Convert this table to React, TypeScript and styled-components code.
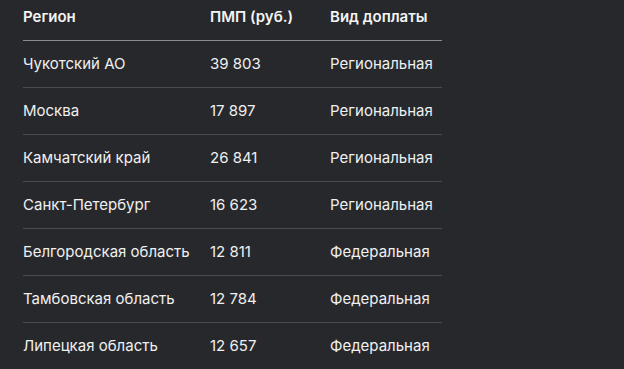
import React from "react";
import styled, { createGlobalStyle } from "styled-components";

const Global = createGlobalStyle`
  html, body { margin: 0; padding: 0; background: #27282c; }
  body { font-family: Inter, "Noto Sans", sans-serif; color: #ececec; }
`;

const Page = styled.div`
  width: 624px;
  height: 369px;
  overflow: hidden;
  padding-left: 23px;
  box-sizing: border-box;
`;

const Table = styled.table`
  width: 419px;
  border-collapse: collapse;
  font-size: 15px;
  line-height: 20px;
`;

const Th = styled.th<{ $w: number }>`
  width: ${(p) => p.$w}px;
  text-align: left;
  font-weight: 600;
  color: #f4f4f4;
  padding: 7px 0 13px 0;
  border-bottom: 1px solid #8c8c8e;
`;

const Td = styled.td`
  padding: 13px 0 13px 0;
  color: #f0f0f0;
  border-bottom: 1px solid #4a4b4f;
  white-space: nowrap;
`;

const rows: [string, string, string][] = [
  ["Чукотский АО", "39 803", "Региональная"],
  ["Москва", "17 897", "Региональная"],
  ["Камчатский край", "26 841", "Региональная"],
  ["Санкт-Петербург", "16 623", "Региональная"],
  ["Белгородская область", "12 811", "Федеральная"],
  ["Тамбовская область", "12 784", "Федеральная"],
  ["Липецкая область", "12 657", "Федеральная"],
];

export default function App() {
  return (
    <>
      <Global />
      <Page>
        <Table>
          <thead>
            <tr>
              <Th $w={187}>Регион</Th>
              <Th $w={120}>ПМП (руб.)</Th>
              <Th $w={112}>Вид доплаты</Th>
            </tr>
          </thead>
          <tbody>
            {rows.map((r) => (
              <tr key={r[0]}>
                <Td>{r[0]}</Td>
                <Td>{r[1]}</Td>
                <Td>{r[2]}</Td>
              </tr>
            ))}
          </tbody>
        </Table>
      </Page>
    </>
  );
}
